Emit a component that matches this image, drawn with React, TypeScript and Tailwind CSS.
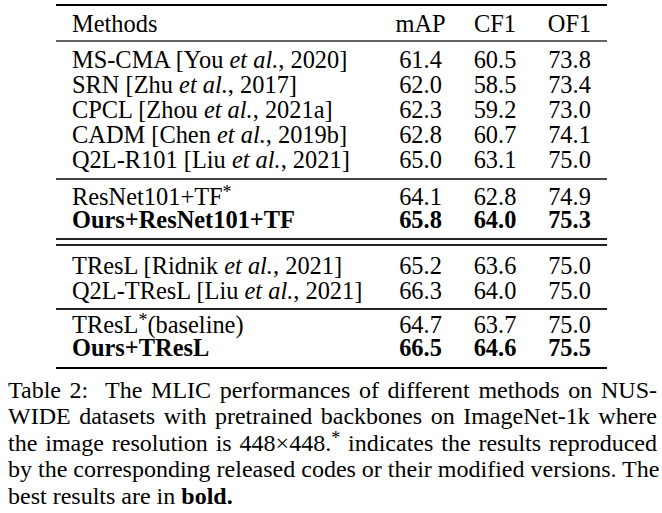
const Al = () => <i>et al.</i>;

type Row = { m: React.ReactNode; v: [string, string, string]; bold?: boolean };

function TRow({ row, lh }: { row: Row; lh: string }) {
  return (
    <div className={`grid grid-cols-[327px_75px_74px_75px] ${lh} ${row.bold ? "font-bold" : ""}`}>
      <div className="pl-[16px] whitespace-nowrap">{row.m}</div>
      {row.v.map((x, i) => (
        <div key={i} className="text-center">
          {x}
        </div>
      ))}
    </div>
  );
}

const Star = () => <span className="text-[18px] relative top-[-7px] leading-none">*</span>;

const sec1: Row[] = [
  { m: <>MS-CMA [You <Al />, 2020]</>, v: ["61.4", "60.5", "73.8"] },
  { m: <>SRN [Zhu <Al />, 2017]</>, v: ["62.0", "58.5", "73.4"] },
  { m: <>CPCL [Zhou <Al />, 2021a]</>, v: ["62.3", "59.2", "73.0"] },
  { m: <>CADM [Chen <Al />, 2019b]</>, v: ["62.8", "60.7", "74.1"] },
  { m: <>Q2L-R101 [Liu <Al />, 2021]</>, v: ["65.0", "63.1", "75.0"] },
];

const sec2: Row[] = [
  { m: <>ResNet101+TF<Star /></>, v: ["64.1", "62.8", "74.9"] },
  { m: <>Ours+ResNet101+TF</>, v: ["65.8", "64.0", "75.3"], bold: true },
];

const sec3: Row[] = [
  { m: <>TResL [Ridnik <Al />, 2021]</>, v: ["65.2", "63.6", "75.0"] },
  { m: <>Q2L-TResL [Liu <Al />, 2021]</>, v: ["66.3", "64.0", "75.0"] },
];

const sec4: Row[] = [
  { m: <>TResL<Star />(baseline)</>, v: ["64.7", "63.7", "75.0"] },
  { m: <>Ours+TResL</>, v: ["66.5", "64.6", "75.5"], bold: true },
];

export default function App() {
  return (
    <div className="w-[662px] h-[513px] bg-white text-black font-[family-name:Liberation_Serif,serif] text-[24px] overflow-hidden pt-[4px]">
      <div className="ml-[56px] w-[551px] text-[24.4px]">
        <div className="h-[2px] bg-black" />
        <div className="pt-[4.5px] pb-[4.5px] grid grid-cols-[327px_75px_74px_75px] leading-[25px]">
          <div className="pl-[16px]">Methods</div>
          <div className="text-center">mAP</div>
          <div className="text-center">CF1</div>
          <div className="text-center">OF1</div>
        </div>
        <div className="h-[2px] bg-[#666]" />
        <div className="pt-[5px] pb-[6px]">
          {sec1.map((r, i) => (
            <TRow key={i} row={r} lh="leading-[25px]" />
          ))}
        </div>
        <div className="h-[2px] bg-[#444]" />
        <div className="pt-[5px] pb-[7px]">
          {sec2.map((r, i) => (
            <TRow key={i} row={r} lh="leading-[23px]" />
          ))}
        </div>
        <div className="h-[2px] bg-[#222]" />
        <div className="h-[4px]" />
        <div className="h-[2px] bg-[#222]" />
        <div className="pt-[6.5px] pb-[5.5px]">
          {sec3.map((r, i) => (
            <TRow key={i} row={r} lh="leading-[25px]" />
          ))}
        </div>
        <div className="h-[2px] bg-[#222]" />
        <div className="pt-[3.2px] pb-[7.8px]">
          {sec4.map((r, i) => (
            <TRow key={i} row={r} lh="leading-[23px]" />
          ))}
        </div>
        <div className="h-[2px] bg-black" />
      </div>
      <div className="ml-[8px] w-[649px] pt-[7.6px] leading-[26.5px] whitespace-nowrap">
        <div className="text-justify [text-align-last:justify]">
          Table 2:&nbsp; The MLIC performances of different methods on NUS-
        </div>
        <div className="text-justify [text-align-last:justify]">
          WIDE datasets with pretrained backbones on ImageNet-1k where
        </div>
        <div className="text-justify [text-align-last:justify]">
          the image resolution is 448×448.<Star /> indicates the results reproduced
        </div>
        <div className="text-justify [text-align-last:justify]">
          by the corresponding released codes or their modified versions. The
        </div>
        <div>
          best results are in <b>bold.</b>
        </div>
      </div>
    </div>
  );
}
